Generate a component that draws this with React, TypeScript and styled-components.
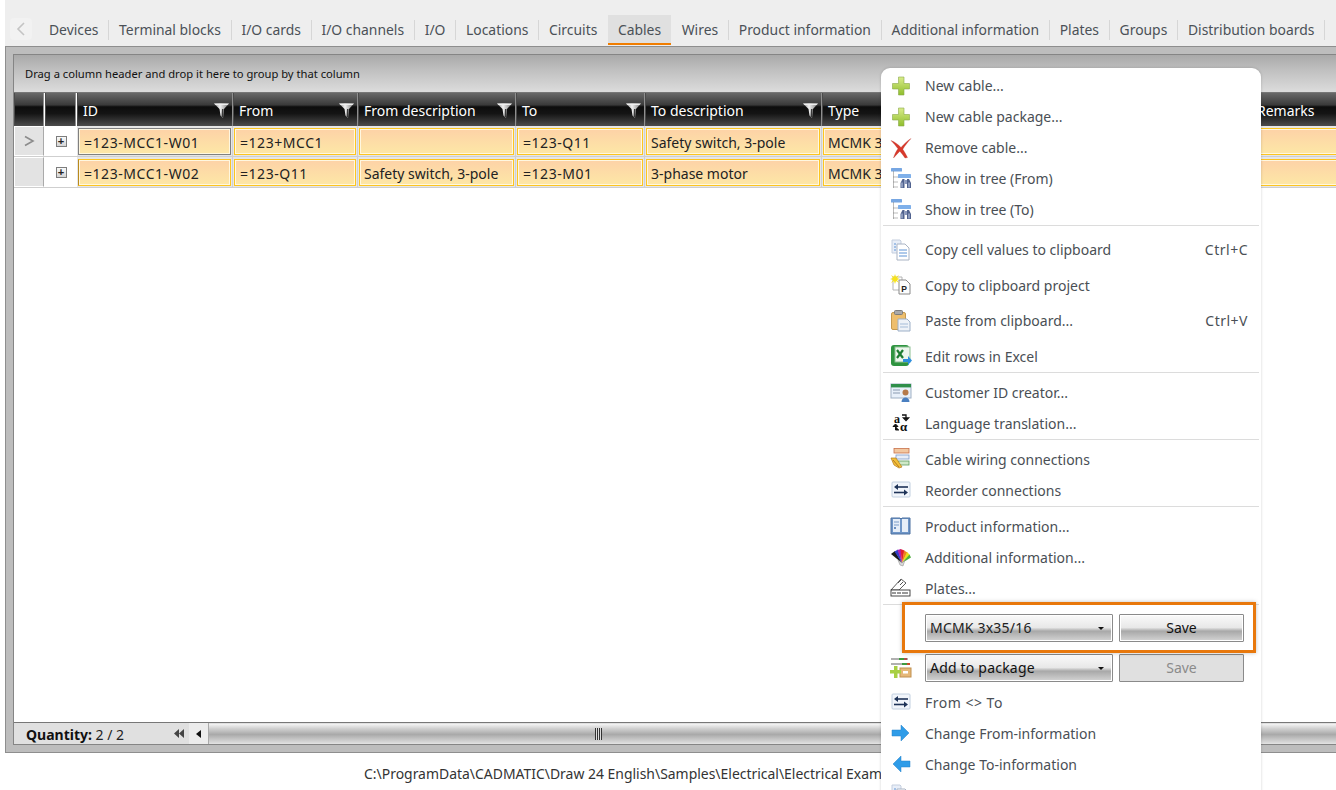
import React from 'react';
import styled, { createGlobalStyle } from 'styled-components';

const FONT = `"Noto Sans", "Open Sans", "Liberation Sans", sans-serif`;

const Global = createGlobalStyle`
  html, body { margin: 0; padding: 0; background: #fff; height: 100%; overflow: hidden; }
  #root { height: 100%; }
  * { box-sizing: border-box; }
`;

const Page = styled.div`
  position: relative;
  width: 1336px;
  height: 790px;
  overflow: hidden;
  display: flex;
  flex-direction: column;
  font-family: ${FONT};
  background: #fff;
`;

const TabBar = styled.div`
  height: 46px;
  flex: none;
  margin-left: 5px;
  background: #eeeeee;
  display: flex;
  align-items: flex-end;
  padding: 0 0 1px 5px;
  white-space: nowrap;
  overflow: hidden;
`;

const BackButton = styled.div`
  width: 22px;
  height: 22px;
  margin-bottom: 5px;
  margin-right: 7.2px;
  background: #f2f2f2;
  border-radius: 4px;
  display: flex;
  align-items: center;
  justify-content: center;
  flex: none;
`;

const Tab = styled.div<{ $active?: boolean; $last?: boolean }>`
  height: 30px;
  padding: 0 9.8px;
  flex: none;
  font-size: 13.9px;
  line-height: 30px;
  color: #4b5157;
  position: relative;
  background: ${p => (p.$active ? '#e0e0e0' : 'transparent')};
  border-bottom: 2px solid ${p => (p.$active ? '#f07d00' : 'transparent')};
  margin-right: 1px;
  &::after {
    content: '';
    display: ${p => (p.$last ? 'none' : 'block')};
    position: absolute;
    right: -1px;
    top: 5px;
    height: 20px;
    width: 1px;
    background: #d6d6d6;
  }
`;

const Panel = styled.div`
  height: 707px;
  flex: none;
  margin-left: 5px;
  background: #bdbdbd;
  border: 1px solid #8e8e8e;
  border-right: none;
  padding: 7px 0 7px 7px;
  display: flex;
  flex-direction: column;
`;

const Grid = styled.div`
  flex: 1;
  min-height: 0;
  border-top: 1px solid #858585;
  border-left: 1px solid #858585;
  border-bottom: 1px solid #858585;
  display: flex;
  flex-direction: column;
  background: #fff;
`;

const GroupBar = styled.div`
  height: 38px;
  flex: none;
  padding: 0 0 0 11px;
  display: flex;
  align-items: center;
  font-size: 11.2px;
  color: #111;
  background: linear-gradient(180deg, #a9a9a9 0%, #bdbdbd 35%, #dcdcdc 100%);
  border-bottom: 1px solid #777;
`;

const COLS = '31px 32px 156px 125px 158px 129px 177px 429px 120px';

const HeaderRow = styled.div`
  height: 33px;
  flex: none;
  display: grid;
  grid-template-columns: ${COLS};
  background: #fff;
`;

const HeadCell = styled.div<{ $plain?: boolean }>`
  position: relative;
  height: 33px;
  padding: 8px 0 0 5px;
  margin-right: ${p => (p.$plain ? '1px' : '0')};
  font-size: 14px;
  line-height: 20px;
  color: #fff;
  border-right: 1px solid #8f8f8f;
  border-left: 1px solid #4a4a4a;
  background: linear-gradient(180deg, #686868 0%, #3a3a3a 36%, #0d0d0d 42%, #141414 62%, #4c4c4c 100%);
`;

const Funnel = styled.svg`
  position: absolute;
  right: 3px;
  top: 10px;
`;

const Row = styled.div`
  height: 31px;
  flex: none;
  display: grid;
  grid-template-columns: ${COLS};
  border-bottom: 1px solid #cfcfcf;
  background: #fff;
`;

const Selector = styled.div`
  background: #e3e3e3;
  margin-right: 1px;
  border: 1px solid #fff;
  border-right-color: #aaa;
  display: flex;
  align-items: center;
  justify-content: center;
`;

const Expand = styled.div`
  display: flex;
  align-items: center;
  justify-content: center;
  background: #fff;
`;

const PlusBox = styled.div`
  width: 11px;
  height: 11px;
  border: 1px solid #7d7d7d;
  background: linear-gradient(180deg, #fafafa, #d4d4d4);
  font-family: "Liberation Sans", sans-serif;
  font-size: 11px;
  line-height: 9px;
  font-weight: 700;
  text-align: center;
  color: #222;
`;

const CellWrap = styled.div`
  background: #e6e6e6;
  padding: 2px 1px 1px 1px;
  border-right: 1px solid #d0d0d0;
`;

const Cell = styled.div<{ $focus?: boolean; $stripe?: boolean; $code?: boolean }>`
  height: 27px;
  padding: 0 0 0 ${p => (p.$code ? '5px' : '4px')};
  font-size: 14px;
  line-height: 27px;
  letter-spacing: ${p => (p.$code ? '0.55px' : '0')};
  color: #222;
  white-space: nowrap;
  overflow: hidden;
  border: 1px solid ${p => (p.$focus ? '#808080' : '#fdc51f')};
  border-left-color: ${p => (p.$focus ? '#808080' : p.$stripe ? '#b98a1d' : '#fdc51f')};
  box-shadow: inset 0 0 0 1px #fff7e0;
  background: linear-gradient(180deg, #fdd2a7 0%, #fde7a6 100%);
`;

const Empty = styled.div`
  flex: 1;
  background: #fff;
`;

const Footer = styled.div`
  height: 22px;
  flex: none;
  display: flex;
  align-items: stretch;
  background: #e0e0e0;
  border-top: 1px solid #777;
`;

const Quantity = styled.div`
  width: 160px;
  padding-left: 12px;
  font-size: 14px;
  line-height: 23px;
  color: #222;
  flex: none;
  b { color: #111; font-weight: 700; }
`;

const DoubleArrow = styled.svg`
  align-self: center;
  flex: none;
  margin-right: 5px;
`;

const ScrollButton = styled.div`
  width: 20px;
  flex: none;
  background: #ececec;
  display: flex;
  align-items: center;
  justify-content: center;
  border-right: 1px solid #aaa;
`;

const Thumb = styled.div`
  flex: 1;
  margin: 1px 0;
  position: relative;
  background: linear-gradient(180deg, #f4f4f4 0%, #cfcfcf 25%, #a9a9a9 55%, #dcdcdc 100%);
`;

const Grip = styled.div`
  position: absolute;
  left: 386px;
  top: 4px;
  width: 7px;
  height: 12px;
  background: repeating-linear-gradient(90deg, #333 0 1px, #ddd 1px 2px);
`;

const Status = styled.div`
  flex: 1;
  padding: 12px 0 0 364px;
  font-size: 13.95px;
  line-height: 18px;
  color: #333;
  white-space: nowrap;
`;

const Menu = styled.div`
  position: absolute;
  left: 881px;
  top: 68px;
  width: 380px;
  height: 760px;
  padding-top: 2px;
  background: #fff;
  border-radius: 9px;
  box-shadow: 0 0 3px rgba(0, 0, 0, 0.18);
  display: flex;
  flex-direction: column;
`;

const MenuGroup = styled.div<{ $top?: number; $gap?: number }>`
  display: flex;
  flex-direction: column;
  flex: none;
  padding-top: ${p => p.$top ?? 0}px;
  gap: ${p => p.$gap ?? 0}px;
`;

const Separator = styled.div`
  height: 1px;
  flex: none;
  margin: 0 2px;
  background: #dcdcdc;
`;

const Item = styled.div<{ $spaced?: boolean }>`
  height: 31px;
  flex: none;
  display: flex;
  align-items: center;
  padding: 0 13px 0 9px;
  font-size: 14px;
  letter-spacing: ${p => (p.$spaced ? '0.5px' : '0')};
  color: #4a4f55;
  white-space: nowrap;
`;

const IconBox = styled.svg`
  flex: none;
  width: 22px;
  height: 22px;
  margin-right: 13px;
`;

const ItemLabel = styled.span`
  flex: 1;
`;

const Shortcut = styled.span`
  flex: none;
  letter-spacing: 0.5px;
  color: #4a4f55;
`;

const ControlRow = styled.div<{ $h: number }>`
  height: ${p => p.$h}px;
  flex: none;
  display: flex;
  align-items: center;
  padding: 0 17px 0 9px;
`;

const Combo = styled.div<{ $dark?: boolean }>`
  width: 188px;
  height: 28px;
  flex: none;
  padding: 0 0 0 4px;
  position: relative;
  font-size: 14px;
  line-height: 26px;
  letter-spacing: 0.2px;
  color: ${p => (p.$dark ? '#111' : '#222')};
  border: 1px solid #8a8a8a;
  border-radius: 1px;
  background: linear-gradient(180deg, #fafafa 0%, #e8e8e8 48%, #a8a8a8 62%, #d4d4d4 100%);
  box-shadow: inset 0 0 0 1px #fff;
  &::after {
    content: '';
    position: absolute;
    right: 8px;
    top: 12px;
    border-left: 3px solid transparent;
    border-right: 3px solid transparent;
    border-top: 3px solid #111;
  }
`;

const SaveButton = styled.div<{ $off?: boolean }>`
  width: 125px;
  height: 28px;
  flex: none;
  margin-left: 6px;
  text-align: center;
  font-size: 14px;
  line-height: 26px;
  border: 1px solid #8a8a8a;
  border-radius: 1px;
  color: ${p => (p.$off ? '#8b8b8b' : '#111')};
  background: ${p =>
    p.$off ? '#e0e0e0' : 'linear-gradient(180deg, #fafafa 0%, #e8e8e8 48%, #a8a8a8 62%, #d4d4d4 100%)'};
  box-shadow: ${p => (p.$off ? 'none' : 'inset 0 0 0 1px #fff')};
`;

const Highlight = styled.div`
  position: absolute;
  left: 21px;
  top: 534px;
  width: 354px;
  height: 51px;
  border: 3px solid #e8780c;
  box-shadow: 0 0 4px rgba(0, 0, 0, 0.25);
  pointer-events: none;
`;

/* ---------- icons ---------- */

const Plus = () => (
  <IconBox viewBox="0 0 22 22">
    <defs>
      <linearGradient id="gp" x1="0" y1="0" x2="0" y2="1">
        <stop offset="0" stopColor="#d9ec8a" />
        <stop offset="1" stopColor="#8fbe2c" />
      </linearGradient>
    </defs>
    <path d="M8.500 2h5.500v6.500h5.500V14H14v6H8.500v-6H2.500V8.500h6z" fill="url(#gp)" stroke="#8aa84a" strokeWidth=".6" />
  </IconBox>
);

const Cross = () => (
  <IconBox viewBox="0 0 22 22">
    <path
      d="M1 3.500C5 5 8 7.500 11 10.500 14 7 17 4 21 1.500 17.500 5.500 15 8.500 12.800 12.200 14.500 15 16 17.500 17.500 20.500L15 21C13 18 11.500 16 9.800 14.200 7.500 16.500 5.500 18.800 3.500 21 4.500 17.500 6 14.500 8 11.800 6 9 3.500 6 1 3.500z"
      fill="#d8392b"
      stroke="#b52a20"
      strokeWidth=".3"
    />
  </IconBox>
);

const TreeFind = () => (
  <IconBox viewBox="0 0 22 22">
    <rect x="1" y="0" width="11" height="3.500" rx=".6" fill="#76a6e2" />
    <path d="M3.500 3.500V20M3.500 9H8M3.500 14H8M3.500 19H8" stroke="#777" strokeDasharray="1 1" fill="none" />
    <rect x="8" y="6" width="13" height="4" rx=".6" fill="#7fb0ea" />
    <path d="M10.500 20v-5l2-4h2v9zM21 20v-5l-2-4h-2v9z" fill="#50628e" />
    <rect x="14.500" y="12" width="2.500" height="4" fill="#8a98bc" />
    <path d="M12 14.500v5M19 14.500v5" stroke="#c8d4ec" />
  </IconBox>
);

const CopyCells = () => (
  <IconBox viewBox="0 0 22 22">
    <path d="M2 1h8l1 1v12H2z" fill="#e8eef8" stroke="#c4cede" />
    <path d="M7 5h8l4 4v12H7z" fill="#fff" stroke="#aab4c4" />
    <path d="M4 5h2M4 8h2M4 11h2M9 11h8M9 14h8M9 17h8" stroke="#5f94d6" />
  </IconBox>
);

const CopyProject = () => (
  <IconBox viewBox="0 0 22 22">
    <path d="M3 3h9v13H3z" fill="#fff" stroke="#b5b5b5" />
    <path d="M9 6h7l4 4v10H9z" fill="#fdfdfd" stroke="#8a8a8a" />
    <path d="M5 0l1 3 3-2-2 3 3 1-3 1 2 3-3-2-1 3-1-3-3 2 2-3-3-1 3-1-2-3 3 2z" fill="#f7e21a" />
    <text x="11.200" y="18" fontFamily="Liberation Sans, sans-serif" fontSize="8.500" fontWeight="700" fill="#222">P</text>
  </IconBox>
);

const Paste = () => (
  <IconBox viewBox="0 0 22 22">
    <rect x="1.500" y="2.500" width="14" height="17" rx="1.500" fill="#eebe6c" stroke="#c69a4e" />
    <rect x="4.500" y="0.500" width="8" height="4" rx="1" fill="#a9a9a9" stroke="#7d7d7d" />
    <path d="M8 9h9l3 3v9H8z" fill="#eef2f8" stroke="#9db0c8" />
    <path d="M10 14h8M10 17h8" stroke="#a5bcd8" />
  </IconBox>
);

const Excel = () => (
  <IconBox viewBox="0 0 22 22">
    <rect x="1" y="0" width="18" height="21" rx="3" fill="#2f9440" />
    <rect x="5" y="2" width="15" height="15" fill="#eef6ee" stroke="#8cbf92" />
    <path d="M7 5l6 8M13 5l-6 8" stroke="#1f7d33" strokeWidth="2.200" />
    <path d="M13 14h5v-3l4 4.500-4 4.500v-3h-5z" fill="#2f8fe0" />
  </IconBox>
);

const CustomerId = () => (
  <IconBox viewBox="0 0 22 22">
    <rect x="1" y="3" width="20" height="14" fill="#e8f0fa" stroke="#9fb0c4" />
    <rect x="1" y="3" width="20" height="3.400" fill="#2f8f4a" />
    <path d="M3 9h7M3 12h7" stroke="#8a9ab0" />
    <circle cx="15.500" cy="11.500" r="3" fill="#b57a4a" />
    <path d="M11.500 21c0-6 8-6 8 0z" fill="#4a7fc0" />
  </IconBox>
);

const Language = () => (
  <IconBox viewBox="0 0 22 22">
    <text x="4" y="11" fontFamily="Liberation Serif, serif" fontSize="12" fontWeight="700" fill="#111">a</text>
    <text x="10" y="19" fontFamily="Liberation Serif, serif" fontSize="13" fontWeight="700" fill="#111">α</text>
    <path d="M12 3h4v4M16 8.500l-2.500-2.500h5z" stroke="#111" fill="none" strokeWidth="1.300" />
    <path d="M9 18H5.500v-4M5.500 12l2.500 2.500H3z" stroke="#111" fill="#111" strokeWidth="1" />
  </IconBox>
);

const Wiring = () => (
  <IconBox viewBox="0 0 22 22">
    <rect x="4" y="0.500" width="15" height="4.500" fill="#f3c8a0" stroke="#c8704a" strokeWidth=".8" />
    <rect x="6" y="7" width="13" height="4" fill="#e8eef8" stroke="#7d9bc8" strokeWidth=".8" />
    <rect x="8" y="13" width="11" height="4" fill="#cfe8c8" stroke="#5f9c5f" strokeWidth=".8" />
    <path d="M1 10l5 0 6 9-3 1-5-3z" fill="#f2c038" stroke="#b57820" strokeWidth=".7" />
    <path d="M3 12l6 7" stroke="#b57820" />
  </IconBox>
);

const Swap = () => (
  <IconBox viewBox="0 0 22 22">
    <rect x="2" y="3" width="18" height="15" rx="1" fill="#f1f5fb" stroke="#c2d0e0" />
    <path d="M8 8h10" stroke="#1e3358" strokeWidth="1.600" />
    <path d="M8 5l-4 3 4 3z" fill="#1e3358" />
    <path d="M4 13.500h10" stroke="#1e3358" strokeWidth="1.600" />
    <path d="M14 10.500l4 3-4 3z" fill="#1e3358" />
  </IconBox>
);

const Book = () => (
  <IconBox viewBox="0 0 22 22">
    <path d="M1 3h9l1 1 1-1h8v16H1z" fill="#6f96c8" stroke="#4c70a0" />
    <path d="M3 4h7v13H3zM12 4h6v13h-6z" fill="#e6eef8" />
    <path d="M4 7h5M4 10h5" stroke="#7a9cc8" />
    <rect x="4" y="12" width="2" height="2" fill="#6b8fc0" />
  </IconBox>
);

const Fan = () => (
  <IconBox viewBox="0 0 22 22">
    <path d="M12 17L1 8l4-3z" fill="#1a1a1a" />
    <path d="M12 17L4.500 5.500 8 3.500z" fill="#3040c8" />
    <path d="M12 17L7.500 4 11 3z" fill="#b020b0" />
    <path d="M12 17L10.500 3l4 1.500z" fill="#e02030" />
    <path d="M12 17L14 4.500l3.500 2z" fill="#f08020" />
    <path d="M12 17L17 6l3 3z" fill="#e8e020" />
    <path d="M12 17L19.500 8.500l1.500 3z" fill="#50b040" />
    <path d="M8 14l4 3 3-3-2 6-3-1z" fill="#d8d8d8" stroke="#888" strokeWidth=".5" />
  </IconBox>
);

const PlateIcon = () => (
  <IconBox viewBox="0 0 22 22">
    <path d="M1 13L11 2l5 4-7 7z" fill="#fff" stroke="#333" strokeWidth=".8" />
    <rect x="1" y="13" width="19" height="6" fill="#fff" stroke="#333" strokeWidth=".9" />
    <path d="M3 15v2M5 15v2M8 15v2M10 15v2M13 15v2M15 15v2M17 15v2" stroke="#333" />
    <path d="M8 6l3-3M10 8l3-3" stroke="#555" />
  </IconBox>
);

const Package = () => (
  <IconBox viewBox="0 0 22 22">
    <path d="M1 2h17M1 7h19" stroke="#b0b0b0" strokeWidth="1.800" />
    <rect x="9" y="1" width="5" height="2" fill="#3f9a3f" />
    <rect x="14" y="1" width="3" height="2" fill="#b05050" />
    <rect x="12" y="6" width="5" height="2" fill="#3f9a3f" />
    <rect x="17" y="6" width="3" height="2" fill="#c84a2a" />
    <rect x="10" y="11" width="11" height="9" fill="#e6b878" stroke="#c09050" />
    <rect x="13" y="14" width="5" height="2.500" fill="#fff" />
    <path d="M4 9h3.500v4H11v3.500H7.500V21H4v-4.500H0V13h4z" fill="#a8cf44" />
  </IconBox>
);

const ArrowRight = () => (
  <IconBox viewBox="0 0 22 22">
    <path d="M2 8h9V3l8 8-8 8v-5H2z" fill="#2f9ce8" stroke="#2480c8" strokeWidth=".5" strokeLinejoin="round" />
  </IconBox>
);

const ArrowLeft = () => (
  <IconBox viewBox="0 0 22 22">
    <path d="M20 8h-9V3l-8 8 8 8v-5h9z" fill="#2f9ce8" stroke="#2480c8" strokeWidth=".5" strokeLinejoin="round" />
  </IconBox>
);

const NoIcon = () => <IconBox viewBox="0 0 22 22" />;

const FunnelIcon = () => (
  <Funnel width="15" height="15" viewBox="0 0 15 15">
    <defs>
      <linearGradient id="fn" x1="0" y1="0" x2="1" y2="0">
        <stop offset="0" stopColor="#8c8c8c" />
        <stop offset=".4" stopColor="#f0f0f0" />
        <stop offset="1" stopColor="#777" />
      </linearGradient>
    </defs>
    <path d="M0 0.500h15L10 6l-1 9-2.500-2.500L5.500 6z" fill="url(#fn)" />
    <path d="M9.500 6L9 15l-1.500-1.500L8 6z" fill="#3a3a3a" />
    <path d="M0 0.500h15l-1.500 1.500h-12z" fill="#efefef" />
  </Funnel>
);

/* ---------- data ---------- */

const tabs = [
  'Devices', 'Terminal blocks', 'I/O cards', 'I/O channels', 'I/O', 'Locations', 'Circuits',
  'Cables', 'Wires', 'Product information', 'Additional information', 'Plates', 'Groups',
  'Distribution boards',
];

const headers = ['ID', 'From', 'From description', 'To', 'To description', 'Type', 'Remarks'];

const rows = [
  ['=123-MCC1-W01', '=123+MCC1', '', '=123-Q11', 'Safety switch, 3-pole', 'MCMK 3x35/16', ''],
  ['=123-MCC1-W02', '=123-Q11', 'Safety switch, 3-pole', '=123-M01', '3-phase motor', 'MCMK 3x35/16', ''],
];

type MenuEntry = { icon: React.ReactNode; label: string; key?: string };

const groupA: MenuEntry[] = [
  { icon: <Plus />, label: 'New cable...' },
  { icon: <Plus />, label: 'New cable package...' },
  { icon: <Cross />, label: 'Remove cable...' },
  { icon: <TreeFind />, label: 'Show in tree (From)' },
  { icon: <TreeFind />, label: 'Show in tree (To)' },
];
const groupB: MenuEntry[] = [
  { icon: <CopyCells />, label: 'Copy cell values to clipboard', key: 'Ctrl+C' },
  { icon: <CopyProject />, label: 'Copy to clipboard project' },
  { icon: <Paste />, label: 'Paste from clipboard...', key: 'Ctrl+V' },
  { icon: <Excel />, label: 'Edit rows in Excel' },
];
const groupC: MenuEntry[] = [
  { icon: <CustomerId />, label: 'Customer ID creator...' },
  { icon: <Language />, label: 'Language translation...' },
];
const groupD: MenuEntry[] = [
  { icon: <Wiring />, label: 'Cable wiring connections' },
  { icon: <Swap />, label: 'Reorder connections' },
];
const groupE: MenuEntry[] = [
  { icon: <Book />, label: 'Product information...' },
  { icon: <Fan />, label: 'Additional information...' },
  { icon: <PlateIcon />, label: 'Plates...' },
];
const groupF: MenuEntry[] = [
  { icon: <Swap />, label: 'From <> To' },
  { icon: <ArrowRight />, label: 'Change From-information' },
  { icon: <ArrowLeft />, label: 'Change To-information' },
  { icon: <CopyCells />, label: '' },
];

const Entries = ({ items }: { items: MenuEntry[] }) => (
  <>
    {items.map((it, i) => (
      <Item key={i} $spaced={it.label.includes('<>')}>
        {it.icon}
        <ItemLabel>{it.label}</ItemLabel>
        {it.key && <Shortcut>{it.key}</Shortcut>}
      </Item>
    ))}
  </>
);

export default function App() {
  return (
    <Page>
      <Global />
      <TabBar>
        <BackButton>
          <svg width="10" height="14" viewBox="0 0 10 14">
            <path d="M8 1L2 7l6 6" fill="none" stroke="#c4c4c4" strokeWidth="1.600" />
          </svg>
        </BackButton>
        {tabs.map(t => (
          <Tab key={t} $active={t === 'Cables'} $last={t === 'Circuits' || t === 'Cables'}>
            {t}
          </Tab>
        ))}
      </TabBar>
      <Panel>
        <Grid>
          <GroupBar>Drag a column header and drop it here to group by that column</GroupBar>
          <HeaderRow>
            <HeadCell $plain />
            <HeadCell $plain />
            {headers.map(h => (
              <HeadCell key={h}>
                {h}
                {h !== 'Type' && h !== 'Remarks' && <FunnelIcon />}
              </HeadCell>
            ))}
          </HeaderRow>
          {rows.map((r, ri) => (
            <Row key={ri}>
              <Selector>
                {ri === 0 && (
                  <svg width="12" height="12" viewBox="0 0 12 12">
                    <path d="M2 1.500L10 6l-8 4.500" fill="none" stroke="#8c8c8c" strokeWidth="1.600" />
                  </svg>
                )}
              </Selector>
              <Expand>
                <PlusBox>+</PlusBox>
              </Expand>
              {r.map((c, ci) => (
                <CellWrap key={ci}>
                  <Cell $focus={ri === 0 && ci === 0} $stripe={ri === 1 && ci === 0} $code={c.startsWith('=')}>
                    {c}
                  </Cell>
                </CellWrap>
              ))}
            </Row>
          ))}
          <Empty />
          <Footer>
            <Quantity>
              <b>Quantity:</b> 2 / 2
            </Quantity>
            <DoubleArrow width="10" height="9" viewBox="0 0 10 9">
              <path d="M5 0v9L0 4.500zM10 0v9L5 4.500z" fill="#444" />
            </DoubleArrow>
            <ScrollButton>
              <svg width="6" height="8" viewBox="0 0 6 8">
                <path d="M5 0v8L0 4z" fill="#111" />
              </svg>
            </ScrollButton>
            <Thumb>
              <Grip />
            </Thumb>
          </Footer>
        </Grid>
      </Panel>
      <Status>C:\ProgramData\CADMATIC\Draw 24 English\Samples\Electrical\Electrical Example.dsgn</Status>
      <Menu>
        <MenuGroup>
          <Entries items={groupA} />
        </MenuGroup>
        <Separator />
        <MenuGroup $top={8} $gap={4.67}>
          <Entries items={groupB} />
        </MenuGroup>
        <Separator />
        <MenuGroup $top={4}>
          <Entries items={groupC} />
        </MenuGroup>
        <Separator />
        <MenuGroup $top={4}>
          <Entries items={groupD} />
        </MenuGroup>
        <Separator />
        <MenuGroup $top={4}>
          <Entries items={groupE} />
        </MenuGroup>
        <Separator />
        <ControlRow $h={47}>
          <NoIcon />
          <Combo>MCMK 3x35/16</Combo>
          <SaveButton>Save</SaveButton>
        </ControlRow>
        <ControlRow $h={32}>
          <Package />
          <Combo $dark>Add to package</Combo>
          <SaveButton $off>Save</SaveButton>
        </ControlRow>
        <MenuGroup $top={3}>
          <Entries items={groupF} />
        </MenuGroup>
        <Highlight />
      </Menu>
    </Page>
  );
}
